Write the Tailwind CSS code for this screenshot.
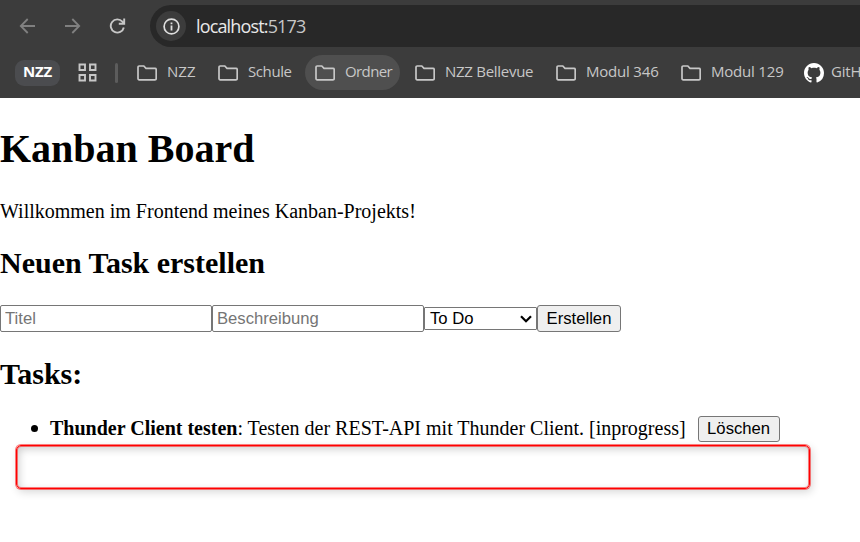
<!DOCTYPE html>
<html lang="de">
<head>
<meta charset="utf-8">
<title>Kanban Board</title>
<script src="https://cdn.jsdelivr.net/npm/@tailwindcss/browser@4"></script>
</head>
<body class="h-[542px] w-[860px] overflow-hidden bg-white font-['Liberation_Serif',serif] text-[20px] text-black">
<svg class="hidden">
  <symbol id="folder" viewBox="0 0 20 16"><path d="M1 13.6V2.2Q1 1 2.2 1h4.6l2.2 2.4h9Q19.2 3.4 19.2 4.6v9Q19.2 14.8 18 14.8H2.2Q1 14.8 1 13.6Z" fill="none" stroke="currentColor" stroke-width="1.7"/></symbol>
</svg>
<header class="h-[98px] overflow-hidden bg-[#3c3c3c] font-['Open_Sans','Noto_Sans',sans-serif] text-[#c7c7c7]">
  <div class="flex h-[52px] items-center pl-[19px]">
    <svg class="h-4 w-[17px] shrink-0 text-[#808080]" viewBox="0 0 17 16" fill="none" stroke="currentColor" stroke-width="1.8"><path d="M16 8H2M8.7 1L1.8 8l6.9 7"/></svg>
    <svg class="ml-7 h-4 w-[17px] shrink-0 text-[#808080]" viewBox="0 0 17 16" fill="none" stroke="currentColor" stroke-width="1.8"><path d="M1 8h14M8.3 1l6.9 7-6.9 7"/></svg>
    <svg class="ml-7 h-4 w-[17px] shrink-0" viewBox="0 0 17 16" fill="none" stroke="currentColor" stroke-width="1.9"><path d="M14.8 9.5A6.6 6.6 0 1 1 13.4 3.7L15 5.4M15.2 .6v5.2H9.8"/></svg>
    <div class="ml-[24px] flex h-[42px] w-[750px] shrink-0 items-center rounded-l-full bg-[#282828] pl-1.5">
      <div class="flex size-[30px] items-center justify-center rounded-full bg-[#3c3c3c]">
        <svg class="size-[17px] text-[#dedede]" viewBox="0 0 17 17"><circle cx="8.5" cy="8.5" r="7.4" fill="none" stroke="currentColor" stroke-width="1.7"/><path d="M7.6 7.6h1.8v5H7.6zM7.6 4.4h1.8v1.8H7.6z" fill="currentColor"/></svg>
      </div>
      <div class="ml-[10px] text-[18px] leading-6 tracking-[-0.85px] whitespace-nowrap"><span class="text-[#e8e8e8]">localhost:</span><span>5173</span></div>
    </div>
  </div>
  <div class="flex h-[41px] items-center pl-[15px] text-[15px] whitespace-nowrap">
    <div class="flex h-[26px] w-[45px] shrink-0 items-center justify-center rounded-[9px] bg-[#4b4c4f] pb-0.5 text-[15px] font-bold tracking-[-0.2px] text-white">NZZ</div>
    <svg class="ml-[18px] h-[19px] w-[19px] shrink-0" viewBox="0 0 19 19" fill="none" stroke="currentColor" stroke-width="1.9"><path d="M1.5 1.5H7V7H1.5zM12 1.5h5.5V7H12zM1.5 12H7v5.5H1.5zM12 12h5.5v5.5H12z"/></svg>
    <div class="ml-[18px] h-5 w-[3px] shrink-0 rounded-full bg-[#5c5c5c]"></div>
    <nav class="ml-[9px] flex shrink-0 items-center gap-[5px]">
      <div class="flex h-[35px] w-[76px] items-center gap-[10px] pl-[10px]"><svg class="h-4 w-5 shrink-0"><use href="#folder"/></svg><span class="pb-0.5">NZZ</span></div>
      <div class="flex h-[35px] w-[92px] items-center gap-[10px] pl-[10px]"><svg class="h-4 w-5 shrink-0"><use href="#folder"/></svg><span class="pb-0.5 tracking-[-0.4px]">Schule</span></div>
      <div class="flex h-[35px] w-[95px] items-center gap-[10px] rounded-full bg-[#4f4f4f] pl-[10px]"><svg class="h-4 w-5 shrink-0"><use href="#folder"/></svg><span class="pb-0.5 tracking-[-0.6px]">Ordner</span></div>
      <div class="flex h-[35px] w-[136px] items-center gap-[10px] pl-[10px]"><svg class="h-4 w-5 shrink-0"><use href="#folder"/></svg><span class="pb-0.5 tracking-[-0.28px]">NZZ Bellevue</span></div>
      <div class="flex h-[35px] w-[120px] items-center gap-[10px] pl-[10px]"><svg class="h-4 w-5 shrink-0"><use href="#folder"/></svg><span class="pb-0.5 tracking-[-0.2px]">Modul 346</span></div>
      <div class="flex h-[35px] w-[118px] items-center gap-[10px] pl-[10px]"><svg class="h-4 w-5 shrink-0"><use href="#folder"/></svg><span class="pb-0.5 tracking-[-0.2px]">Modul 129</span></div>
      <div class="flex h-[35px] items-center gap-[7px] pl-[10px]">
        <svg class="size-5 shrink-0 text-white" viewBox="0 0 16 16" fill="currentColor"><path d="M8 0C3.58 0 0 3.58 0 8c0 3.54 2.29 6.53 5.47 7.59.4.07.55-.17.55-.38 0-.19-.01-.82-.01-1.49-2.01.37-2.53-.49-2.69-.94-.09-.23-.48-.94-.82-1.13-.28-.15-.68-.52-.01-.53.63-.01 1.08.58 1.23.82.72 1.21 1.87.87 2.33.66.07-.52.28-.87.51-1.07-1.78-.2-3.64-.89-3.64-3.95 0-.87.31-1.59.82-2.15-.08-.2-.36-1.02.08-2.12 0 0 .67-.21 2.2.82.64-.18 1.32-.27 2-.27s1.36.09 2 .27c1.53-1.04 2.2-.82 2.2-.82.44 1.1.16 1.92.08 2.12.51.56.82 1.27.82 2.15 0 3.07-1.87 3.75-3.65 3.95.29.25.54.73.54 1.48 0 1.07-.01 1.93-.01 2.2 0 .21.15.46.55.38A8.01 8.01 0 0 0 16 8c0-4.42-3.58-8-8-8"/></svg>
        <span class="pb-0.5 tracking-[-0.2px]">GitHub</span>
      </div>
    </nav>
  </div>
</header>
<main>
  <h1 class="pt-[28px] text-[40px] leading-[46px] font-bold">Kanban Board</h1>
  <p class="mt-[28px] leading-[23px]">Willkommen im Frontend meines Kanban-Projekts!</p>
  <h2 class="mt-[23px] text-[30px] leading-[34px] font-bold">Neuen Task erstellen</h2>
  <form class="mt-[25px] flex h-[27px] items-center font-['Liberation_Sans',sans-serif] text-[16.67px]">
    <input class="h-[27px] w-[212px] rounded-[2px] border border-[#767676] px-[4px] placeholder:text-[#757575]" placeholder="Titel">
    <input class="h-[27px] w-[212px] rounded-[2px] border border-[#767676] px-[4px] placeholder:text-[#757575]" placeholder="Beschreibung">
    <div class="flex h-[23px] w-[113px] items-center justify-between rounded-[1px] border border-[#767676] pr-[4px] pl-[5px]"><span>To Do</span><svg class="h-2 w-3" viewBox="0 0 12 8" fill="none" stroke="black" stroke-width="2.2"><path d="M1 1.3l5 5 5-5"/></svg></div>
    <button type="button" class="h-[27px] w-[84px] rounded-[3px] border border-[#767676] bg-[#efefef]">Erstellen</button>
  </form>
  <h2 class="mt-[25px] text-[30px] leading-[34px] font-bold">Tasks:</h2>
  <ul class="mt-[25px]">
    <li class="flex h-[26px] items-center">
      <span class="mb-[2px] ml-[31px] size-[7px] rounded-full bg-black"></span>
      <span class="ml-[12px] pb-[2px] leading-[23px] whitespace-nowrap"><strong>Thunder Client testen</strong>: Testen der REST-API mit Thunder Client. [inprogress]</span>
      <button type="button" class="ml-[12px] h-[26px] w-[82px] rounded-[3px] border border-[#767676] bg-[#efefef] font-['Liberation_Sans',sans-serif] text-[16.67px] leading-5">Löschen</button>
    </li>
  </ul>
  <div class="mt-[3px] ml-[16px] h-[44px] w-[794px] rounded-[5px] border border-[#ff0000] shadow-[0_0_0_1px_rgba(255,0,0,0.5),2px_3px_8px_rgba(0,0,0,0.16),inset_0_0_0_1px_rgba(255,0,0,0.5),inset_2px_3px_8px_rgba(0,0,0,0.2)]"></div>
</main>
</body>
</html>
